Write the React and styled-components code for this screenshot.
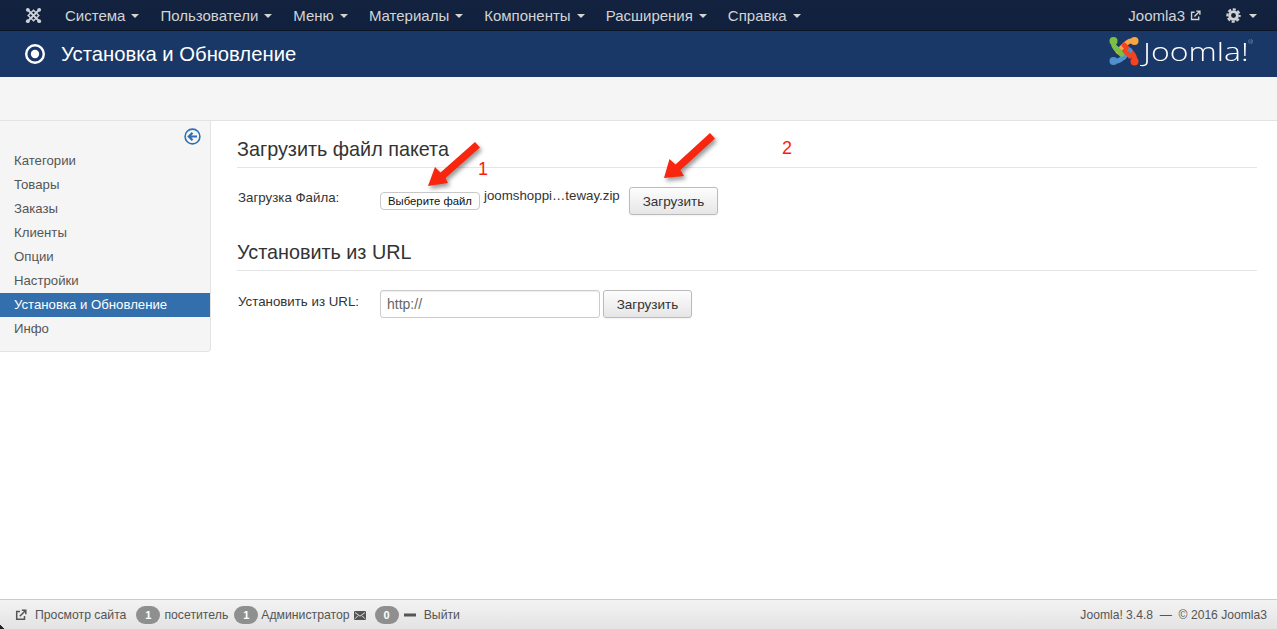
import React from "react";
import styled, { createGlobalStyle } from "styled-components";

const Global = createGlobalStyle`
  html, body { margin: 0; padding: 0; height: 100%; background: #fff; }
  body { font-family: "Liberation Sans", Arial, sans-serif; font-size: 13px; color: #333; }
  #root { height: 100%; }
  * { box-sizing: border-box; }
`;

const Page = styled.div`
  position: relative;
  width: 1277px;
  height: 629px;
  overflow: hidden;
  display: flex;
  flex-direction: column;
`;

const NavBar = styled.nav`
  height: 31px;
  flex: none;
  display: flex;
  align-items: center;
  background: linear-gradient(#13233f, #10203d);
  border-bottom: 1px solid #0a1526;
  color: #d4d4d4;
  font-size: 15px;
`;
const Brand = styled.div`
  width: 65px;
  flex: none;
  display: flex;
  padding-left: 25px;
`;
const Menu = styled.div`
  display: flex;
  gap: 21px;
  flex: 1;
`;
const MenuItem = styled.span`
  display: inline-flex;
  align-items: center;
  white-space: nowrap;
`;
const Caret = styled.i`
  display: inline-block;
  margin-left: ${(p) => p.$left || 6}px;
  margin-top: 1px;
  width: 0;
  height: 0;
  border-left: 4px solid transparent;
  border-right: 4px solid transparent;
  border-top: 4px solid currentColor;
`;
const NavRight = styled.div`
  display: flex;
  align-items: center;
  padding-right: 20px;
`;
const SiteLink = styled.span`
  display: inline-flex;
  align-items: center;
  gap: 5px;
  margin-right: 25px;
`;
const Header = styled.header`
  height: 46px;
  flex: none;
  display: flex;
  align-items: center;
  background: #1a3867;
  color: #fff;
  padding: 0 26px 0 24px;
`;
const Title = styled.h1`
  margin: 0 0 0 15px;
  font-size: 20.25px;
  font-weight: 400;
  line-height: 46px;
  flex: 1;
`;
const Logo = styled.div`
  display: flex;
  align-items: center;
  gap: 4px;
  margin-top: -6px;
`;
const LogoWord = styled.span`
  display: inline-block;
  width: 108px;
  margin-top: -1px;
  font-family: "Open Sans", "Noto Sans", sans-serif;
  font-weight: 300;
  font-size: 25px;
  line-height: 30px;
  white-space: nowrap;
  position: relative;
  transform: scaleX(1.28);
  transform-origin: left center;
  sup {
    font-size: 5px;
    position: absolute;
    left: 82px;
    top: 1px;
    line-height: 10px;
    color: #b9c3d3;
  }
`;
const SubHead = styled.div`
  height: 44px;
  flex: none;
  background: #f5f5f5;
  border-bottom: 1px solid #e3e3e3;
`;
const Main = styled.div`
  flex: 1;
  display: flex;
  align-items: flex-start;
  min-height: 0;
`;
const Sidebar = styled.aside`
  width: 211px;
  height: 231px;
  flex: none;
  background: #f5f5f5;
  border-right: 1px solid #e3e3e3;
  border-bottom: 1px solid #e3e3e3;
  border-bottom-right-radius: 4px;
  padding-top: 7px;
`;
const Collapse = styled.div`
  display: flex;
  justify-content: flex-end;
  padding-right: 9px;
  height: 20px;
`;
const SideList = styled.div`
  margin-top: 1px;
`;
const SideItem = styled.div`
  height: 24px;
  line-height: 24px;
  padding-left: 14px;
  font-size: 13.2px;
  background: ${(p) => (p.$active ? "#336ead" : "transparent")};
  color: ${(p) => (p.$active ? "#fff" : "#555")};
`;
const Content = styled.main`
  flex: 1;
  padding: 0 20px 0 26px;
`;
const SectionTitle = styled.h3`
  margin: ${(p) => p.$top}px 0 0;
  height: 32px;
  font-size: 19.8px;
  font-weight: 400;
  line-height: 27px;
  color: #333;
  border-bottom: 1px solid #e5e5e5;
`;
const FormRow = styled.div`
  display: flex;
  align-items: flex-start;
  margin-top: ${(p) => p.$top}px;
`;
const Label = styled.label`
  width: 143px;
  flex: none;
  padding-left: 1px;
  padding-top: ${(p) => p.$top}px;
  font-size: 13.3px;
  line-height: 18px;
`;
const FileButton = styled.button`
  width: 100px;
  height: 18px;
  margin-top: 5px;
  padding: 0;
  background: #fff;
  border: 1px solid #c8c8c8;
  border-radius: 4px;
  font-family: "Liberation Sans", Arial, sans-serif;
  font-size: 11.3px;
  color: #111;
`;
const FileName = styled.span`
  margin-left: 4px;
  width: 145px;
  flex: none;
  font-size: 13.3px;
  line-height: 18px;
`;
const Btn = styled.button`
  height: 28px;
  width: 89px;
  flex: none;
  padding: 0;
  background: linear-gradient(#fdfdfd, #e6e6e6);
  border: 1px solid #bbb;
  border-radius: 3px;
  box-shadow: 0 1px 2px rgba(0, 0, 0, 0.05);
  font-family: "Liberation Sans", Arial, sans-serif;
  font-size: 13.5px;
  color: #333;
`;
const UrlInput = styled.input`
  width: 220px;
  height: 28px;
  margin-right: 3px;
  padding: 0 6px;
  border: 1px solid #ccc;
  border-radius: 3px;
  font-family: "Liberation Sans", Arial, sans-serif;
  font-size: 14px;
  color: #666;
  box-shadow: inset 0 1px 1px rgba(0, 0, 0, 0.075);
`;
const Footer = styled.footer`
  position: relative;
  height: 30px;
  flex: none;
  display: flex;
  align-items: center;
  justify-content: space-between;
  padding: 1px 10px 0 15px;
  background: linear-gradient(#f3f3f3, #e3e3e3);
  border-top: 1px solid #cbcbcb;
  font-size: 12.25px;
  color: #555;
`;
const WindowCorner = styled.i`
  position: absolute;
  left: 0;
  bottom: 0;
  width: 5px;
  height: 5px;
  background: linear-gradient(45deg, #222 50%, transparent 50%);
`;
const FooterLeft = styled.div`
  display: flex;
  align-items: center;
`;
const FooterText = styled.span`
  margin-left: ${(p) => p.$left || 0}px;
  white-space: nowrap;
`;
const Copyright = styled.span`
  font-size: 12.12px;
  white-space: nowrap;
`;
const FooterIcon = styled.svg`
  margin-left: ${(p) => p.$left}px;
  flex: none;
`;
const Badge = styled.span`
  display: inline-block;
  width: 24px;
  height: 18px;
  margin-left: ${(p) => p.$left || 0}px;
  border-radius: 9px;
  background: #8f8f8f;
  color: #fff;
  font-size: 11px;
  font-weight: 700;
  line-height: 18px;
  text-align: center;
`;
const Note = styled.span`
  position: absolute;
  left: ${(p) => p.$x}px;
  top: ${(p) => p.$y}px;
  color: #fc1c0a;
  font-size: 18px;
  line-height: 18px;
`;
const ArrowSvg = styled.svg`
  position: absolute;
  left: ${(p) => p.$x}px;
  top: ${(p) => p.$y}px;
  filter: drop-shadow(2px 3px 2px rgba(0, 0, 0, 0.4));
`;

const ExternalIcon = ({ size = 12, color = "currentColor" }) => (
  <svg width={size} height={size} viewBox="0 0 12 12" fill="none" stroke={color} strokeWidth="1.5">
    <path d="M9.5 7v3.3H1.7V2.5H5" />
    <path d="M4.8 7.2 10.3 1.7M6.8 1.2h4v4" />
  </svg>
);

const JoomlaMark = () => (
  <svg width="17" height="17" viewBox="0 0 17 17" fill="none" stroke="#cfd2d9">
    <path d="M3 3 14 14M14 3 3 14" strokeWidth="1.8" />
    <path d="M8.5 3.2 13.8 8.5 8.5 13.8 3.2 8.5z" strokeWidth="1.5" />
    <circle cx="2.8" cy="2.8" r="1.9" fill="#cfd2d9" stroke="none" />
    <circle cx="14.2" cy="2.8" r="1.9" fill="#cfd2d9" stroke="none" />
    <circle cx="2.8" cy="14.2" r="1.9" fill="#cfd2d9" stroke="none" />
    <circle cx="14.2" cy="14.2" r="1.9" fill="#cfd2d9" stroke="none" />
  </svg>
);

const JoomlaColorMark = () => (
  <svg width="30" height="30" viewBox="0 0 30 30" fill="none" strokeWidth="5" strokeLinecap="round" strokeLinejoin="round">
    <path d="M4.5 8C4.5 10.5 6 12 8.5 14.5L15 21" stroke="#7ac143" />
    <path d="M22 5C19.5 5 18 6.5 15.5 9L9 15.5" stroke="#f9a541" />
    <path d="M25.5 22C25.5 19.5 24 18 21.5 15.5L15 9" stroke="#f44321" />
    <path d="M8 25C10.5 25 12 23.5 14.5 21L21 14.5" stroke="#5091cd" />
    <path d="M7 12 13 18" stroke="#7ac143" />
    <path d="M16 15 21 20" stroke="#f44321" />
    <circle cx="4.5" cy="5" r="4" fill="#7ac143" stroke="none" />
    <circle cx="25.5" cy="5" r="4" fill="#f9a541" stroke="none" />
    <circle cx="25.5" cy="25.5" r="4" fill="#f44321" stroke="none" />
    <circle cx="4.5" cy="25" r="4" fill="#5091cd" stroke="none" />
  </svg>
);

const Gear = () => (
  <svg width="15" height="15" viewBox="0 0 15 15" fill="none" stroke="#d4d4d4">
    <circle cx="7.5" cy="7.5" r="3.9" strokeWidth="2.9" />
    <circle cx="7.5" cy="7.5" r="6.2" strokeWidth="2" strokeDasharray="3.1 1.77" strokeDashoffset="1.5" />
  </svg>
);

const Arrow = ({ x, y, d }) => (
  <ArrowSvg $x={x} $y={y} width="60" height="55" viewBox="0 0 60 55">
    <path d={d} fill="#f8260f" />
  </ArrowSvg>
);

const menu = ["Система", "Пользователи", "Меню", "Материалы", "Компоненты", "Расширения", "Справка"];
const side = ["Категории", "Товары", "Заказы", "Клиенты", "Опции", "Настройки", "Установка и Обновление", "Инфо"];

export default function App() {
  return (
    <Page>
      <Global />
      <NavBar>
        <Brand><JoomlaMark /></Brand>
        <Menu>
          {menu.map((m) => (
            <MenuItem key={m}>{m}<Caret /></MenuItem>
          ))}
        </Menu>
        <NavRight>
          <SiteLink>Joomla3 <ExternalIcon size={11} /></SiteLink>
          <Gear />
          <Caret $left={8} />
        </NavRight>
      </NavBar>
      <Header>
        <svg width="22" height="22" viewBox="0 0 22 22">
          <circle cx="11" cy="11" r="8.8" fill="none" stroke="#fff" strokeWidth="2.4" />
          <circle cx="11" cy="11" r="4.2" fill="#fff" />
        </svg>
        <Title>Установка и Обновление</Title>
        <Logo>
          <JoomlaColorMark />
          <LogoWord>Joomla!<sup>®</sup></LogoWord>
        </Logo>
      </Header>
      <SubHead />
      <Main>
        <Sidebar>
          <Collapse>
            <svg width="17" height="17" viewBox="0 0 17 17" fill="none" stroke="#2f6fb3">
              <circle cx="8.5" cy="8.5" r="7.4" strokeWidth="1.6" />
              <path d="M13 8.5H5.5M8.5 4.8 4.8 8.5l3.7 3.7" strokeWidth="2.2" />
            </svg>
          </Collapse>
          <SideList>
            {side.map((s) => (
              <SideItem key={s} $active={s === "Установка и Обновление"}>{s}</SideItem>
            ))}
          </SideList>
        </Sidebar>
        <Content>
          <SectionTitle $top={15}>Загрузить файл пакета</SectionTitle>
          <FormRow $top={19}>
            <Label $top={2}>Загрузка Файла:</Label>
            <FileButton>Выберите файл</FileButton>
            <FileName>joomshoppi…teway.zip</FileName>
            <Btn>Загрузить</Btn>
          </FormRow>
          <SectionTitle $top={24}>Установить из URL</SectionTitle>
          <FormRow $top={19}>
            <Label $top={3}>Установить из URL:</Label>
            <UrlInput defaultValue="http://" />
            <Btn>Загрузить</Btn>
          </FormRow>
        </Content>
      </Main>
      <Footer>
        <WindowCorner />
        <FooterLeft>
          <ExternalIcon size={12} color="#555" />
          <FooterText $left={8}>Просмотр сайта</FooterText>
          <Badge $left={10}>1</Badge>
          <FooterText $left={4}>посетитель</FooterText>
          <Badge $left={6}>1</Badge>
          <FooterText $left={3}>Администратор</FooterText>
          <FooterIcon $left={4} width="12" height="9" viewBox="0 0 12 9">
            <rect x="0" y="0" width="12" height="9" rx="1" fill="#555" />
            <path d="M1 1.5 6 5.2l5-3.7M1 7.7l3-3M11 7.7l-3-3" stroke="#f0f0f0" strokeWidth="0.9" fill="none" />
          </FooterIcon>
          <Badge $left={9}>0</Badge>
          <FooterIcon $left={5} width="12" height="4" viewBox="0 0 12 4"><rect width="12" height="3" y="0.5" fill="#555" /></FooterIcon>
          <FooterText $left={8}>Выйти</FooterText>
        </FooterLeft>
        <Copyright>Joomla! 3.4.8 &nbsp;—&nbsp; © 2016 Joomla3</Copyright>
      </Footer>
      <Arrow x={425} y={140} d="M3 46 10 27 15.5 32.5 50 2 55 7.5 20.5 38 23 43Z" />
      <Arrow x={660} y={130} d="M4 48 9.5 29 15.5 34.5 50 3 55 8.5 20.5 40 24 46Z" />
      <Note $x={478} $y={160}>1</Note>
      <Note $x={782} $y={139}>2</Note>
    </Page>
  );
}
